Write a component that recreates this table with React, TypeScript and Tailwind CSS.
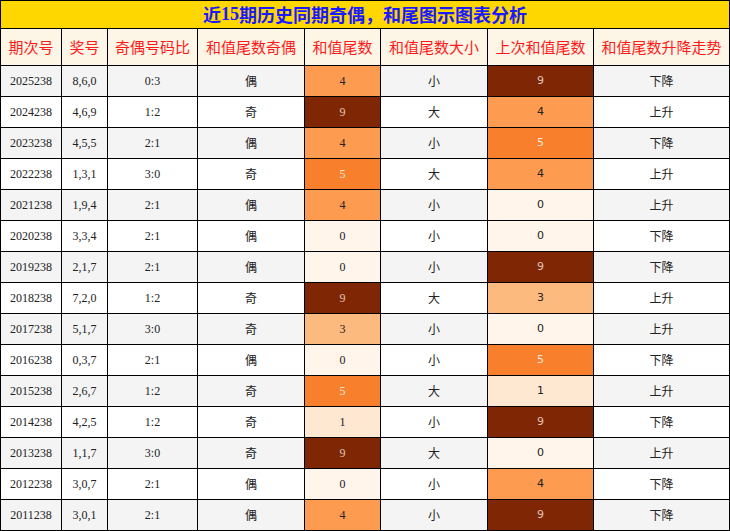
const HEADERS = ["期次号", "奖号", "奇偶号码比", "和值尾数奇偶", "和值尾数", "和值尾数大小", "上次和值尾数", "和值尾数升降走势"]

type Row = [string, string, string, string, number, string, number, string]

const ROWS: Row[] = [
  ["2025238", "8,6,0", "0:3", "偶", 4, "小", 9, "下降"],
  ["2024238", "4,6,9", "1:2", "奇", 9, "大", 4, "上升"],
  ["2023238", "4,5,5", "2:1", "偶", 4, "小", 5, "下降"],
  ["2022238", "1,3,1", "3:0", "奇", 5, "大", 4, "上升"],
  ["2021238", "1,9,4", "2:1", "偶", 4, "小", 0, "上升"],
  ["2020238", "3,3,4", "2:1", "偶", 0, "小", 0, "下降"],
  ["2019238", "2,1,7", "2:1", "偶", 0, "小", 9, "下降"],
  ["2018238", "7,2,0", "1:2", "奇", 9, "大", 3, "上升"],
  ["2017238", "5,1,7", "3:0", "奇", 3, "小", 0, "上升"],
  ["2016238", "0,3,7", "2:1", "偶", 0, "小", 5, "下降"],
  ["2015238", "2,6,7", "1:2", "奇", 5, "大", 1, "上升"],
  ["2014238", "4,2,5", "1:2", "奇", 1, "小", 9, "下降"],
  ["2013238", "1,1,7", "3:0", "奇", 9, "大", 0, "上升"],
  ["2012238", "3,0,7", "2:1", "偶", 0, "小", 4, "下降"],
  ["2011238", "3,0,1", "2:1", "偶", 4, "小", 9, "下降"],
]

// Oranges gradient, 0..9
const HEAT: Record<number, string> = {
  0: "bg-[#fff5eb] text-[#222]",
  1: "bg-[#fee8d2] text-[#222]",
  2: "bg-[#fdd0a2] text-[#222]",
  3: "bg-[#fdba7f] text-[#222]",
  4: "bg-[#fd9b51] text-[#222]",
  5: "bg-[#f87f2c] text-[#f4e4dc]",
  6: "bg-[#e95e0d] text-[#f4e4dc]",
  7: "bg-[#c44103] text-[#e8d0c4]",
  8: "bg-[#9a3103] text-[#e8d0c4]",
  9: "bg-[#7f2704] text-[#e0c4b8]",
}

const serif = "font-['Liberation_Serif','Noto_Sans_CJK_SC',serif]"
const sans = "font-['DejaVu_Sans','Noto_Sans_CJK_SC',sans-serif]"
const cjk = "font-['Noto_Sans_CJK_SC',sans-serif]"

function Cell({ className, children }: { className: string; children: React.ReactNode }) {
  return <div className={`flex h-[30px] items-center justify-center ${className}`}>{children}</div>
}

export default function App() {
  return (
    <div className="flex w-[730px] flex-col gap-px bg-black p-px">
      <div
        className={`flex h-[27px] items-center justify-center bg-[#ffd700] text-[18px] font-bold text-[#1a1aff] ${serif}`}
      >
        <span className={cjk}>近</span>15<span className={cjk}>期历史同期奇偶，和尾图示图表分析</span>
      </div>
      <div className="grid grid-cols-[60px_45px_89px_106px_75px_106px_105px_135px] gap-px">
        {HEADERS.map((h) => (
          <div
            key={h}
            className={`flex h-[36px] items-center justify-center bg-[#fdf5e6] text-[15px] text-[#ff1a1a] ${cjk}`}
          >
            {h}
          </div>
        ))}
        {ROWS.map((r, i) => {
          const bg = i % 2 === 0 ? "bg-[#f4f4f4]" : "bg-white"
          return [
            <Cell key={`${i}-a`} className={`${bg} ${serif} text-[12px] text-[#222]`}>{r[0]}</Cell>,
            <Cell key={`${i}-b`} className={`${bg} ${serif} text-[12px] text-[#222]`}>{r[1]}</Cell>,
            <Cell key={`${i}-c`} className={`${bg} ${serif} text-[12px] text-[#222]`}>{r[2]}</Cell>,
            <Cell key={`${i}-d`} className={`${bg} ${cjk} text-[12px] text-[#222]`}>{r[3]}</Cell>,
            <Cell key={`${i}-e`} className={`${HEAT[r[4]]} ${serif} text-[12px]`}>{r[4]}</Cell>,
            <Cell key={`${i}-f`} className={`${bg} ${cjk} text-[12px] text-[#222]`}>{r[5]}</Cell>,
            <Cell key={`${i}-g`} className={`${HEAT[r[6]]} ${sans} text-[11px]`}>{r[6]}</Cell>,
            <Cell key={`${i}-h`} className={`${bg} ${cjk} text-[12px] text-[#222]`}>{r[7]}</Cell>,
          ]
        })}
      </div>
    </div>
  )
}
